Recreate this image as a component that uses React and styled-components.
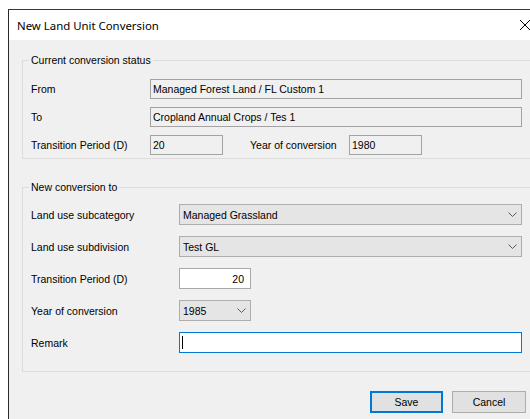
import React from 'react';
import styled, { createGlobalStyle } from 'styled-components';

const GlobalStyle = createGlobalStyle`
    html, body {
        margin: 0;
        padding: 0;
        background: #ffffff;
        overflow: hidden;
    }
    body {
        font-family: "Liberation Sans", Arial, sans-serif;
        font-size: 10.5px;
        color: #000;
    }
`;

const Window = styled.div`
    margin: 9px 0 0 8px;
    width: 539px;
    border-top: 1px solid #3a3a3a;
    border-left: 1px solid #2a2a2a;
`;

const TitleBar = styled.div`
    height: 30px;
    background: #fff;
    display: flex;
    align-items: center;
    justify-content: space-between;
    padding-left: 8px;
    font-family: "Noto Sans", "Open Sans", sans-serif;
    font-size: 11.4px;
    color: #000;
`;

const CloseButton = styled.div`
    width: 46px;
    height: 30px;
    display: flex;
    align-items: center;
    justify-content: center;
`;

const Client = styled.div`
    background: #f0f0f0;
    padding: 20px 0 30px 13px;
`;

const GroupBox = styled.div`
    width: 503px;
    border: 1px solid #dcdcdc;
    margin-top: ${p => p.$gap || 0}px;
    padding: 0 5px ${p => p.$bottom}px 8px;
`;

const Caption = styled.div`
    width: fit-content;
    margin: -7px 0 0 -2px;
    padding: 0 2px;
    height: 13px;
    line-height: 13px;
    background: #f0f0f0;
`;

const Rows = styled.div`
    display: flex;
    flex-direction: column;
    gap: ${p => p.$gap}px;
    margin-top: ${p => p.$top}px;
`;

const Row = styled.div`
    display: flex;
    align-items: center;
    height: ${p => p.$h}px;
`;

const Label = styled.div`
    width: ${p => p.$w}px;
    flex-shrink: 0;
    white-space: nowrap;
`;

const ReadOnlyBox = styled.div`
    box-sizing: border-box;
    width: ${p => p.$w}px;
    height: 20px;
    border: 1px solid #a3a3a3;
    background: #f0f0f0;
    padding-left: 2px;
    display: flex;
    align-items: center;
    white-space: nowrap;
`;

const InlineLabel = styled.div`
    margin: 0 0 0 27px;
    width: 99px;
    white-space: nowrap;
`;

const Combo = styled.div`
    box-sizing: border-box;
    width: ${p => p.$w}px;
    height: 21px;
    border: 1px solid #adadad;
    background: #e5e5e5;
    padding: 0 4px 0 3px;
    display: flex;
    align-items: center;
    justify-content: space-between;
`;

const Input = styled.div`
    box-sizing: border-box;
    width: ${p => p.$w}px;
    height: 21px;
    border: 1px solid ${p => (p.$focused ? '#0078d7' : '#a8a8a8')};
    background: #fff;
    padding: 0 6px 0 2px;
    display: flex;
    align-items: center;
    justify-content: ${p => (p.$right ? 'flex-end' : 'flex-start')};
`;

const Caret = styled.span`
    width: 1px;
    height: 13px;
    background: #000;
`;

const Buttons = styled.div`
    width: 504px;
    margin-top: 19px;
    display: flex;
    justify-content: flex-end;
    gap: 9px;
`;

const Button = styled.button`
    box-sizing: border-box;
    width: ${p => p.$w}px;
    height: 22px;
    margin: 0;
    padding: 0;
    background: #e1e1e1;
    border: ${p => (p.$default ? '2px solid #0078d7' : '1px solid #adadad')};
    font-family: "Liberation Sans", Arial, sans-serif;
    font-size: 10.5px;
    color: #000;
`;

const Chevron = () => (
    <svg width="9" height="5" viewBox="0 0 9 5">
        <path d="M0.5 0.5 L4.5 4.5 L8.5 0.5" fill="none" stroke="#5a5a5a" strokeWidth="1" />
    </svg>
);

const CloseIcon = () => (
    <svg width="10" height="10" viewBox="0 0 10 10">
        <path d="M0 0 L10 10 M10 0 L0 10" stroke="#000" strokeWidth="1" />
    </svg>
);

export default function App() {
    return (
        <>
            <GlobalStyle />
            <Window>
                <TitleBar>
                    <span>New Land Unit Conversion</span>
                    <CloseButton><CloseIcon /></CloseButton>
                </TitleBar>
                <Client>
                    <GroupBox $bottom={3}>
                        <Caption>Current conversion status</Caption>
                        <Rows $top={12} $gap={8}>
                            <Row $h={20}>
                                <Label $w={119}>From</Label>
                                <ReadOnlyBox $w={372}>Managed Forest Land / FL Custom 1</ReadOnlyBox>
                            </Row>
                            <Row $h={20}>
                                <Label $w={119}>To</Label>
                                <ReadOnlyBox $w={372}>Cropland Annual Crops / Tes 1</ReadOnlyBox>
                            </Row>
                            <Row $h={20}>
                                <Label $w={119}>Transition Period (D)</Label>
                                <ReadOnlyBox $w={73}>20</ReadOnlyBox>
                                <InlineLabel>Year of conversion</InlineLabel>
                                <ReadOnlyBox $w={73}>1980</ReadOnlyBox>
                            </Row>
                        </Rows>
                    </GroupBox>

                    <GroupBox $gap={28} $bottom={18}>
                        <Caption>New conversion to</Caption>
                        <Rows $top={10} $gap={11}>
                            <Row $h={21}>
                                <Label $w={148}>Land use subcategory</Label>
                                <Combo $w={343}>Managed Grassland<Chevron /></Combo>
                            </Row>
                            <Row $h={21}>
                                <Label $w={148}>Land use subdivision</Label>
                                <Combo $w={343}>Test GL<Chevron /></Combo>
                            </Row>
                            <Row $h={21}>
                                <Label $w={148}>Transition Period (D)</Label>
                                <Input $w={72} $right>20</Input>
                            </Row>
                            <Row $h={21}>
                                <Label $w={148}>Year of conversion</Label>
                                <Combo $w={72}>1985<Chevron /></Combo>
                            </Row>
                            <Row $h={21}>
                                <Label $w={148}>Remark</Label>
                                <Input $w={343} $focused><Caret /></Input>
                            </Row>
                        </Rows>
                    </GroupBox>

                    <Buttons>
                        <Button $w={73} $default>Save</Button>
                        <Button $w={74}>Cancel</Button>
                    </Buttons>
                </Client>
            </Window>
        </>
    );
}
